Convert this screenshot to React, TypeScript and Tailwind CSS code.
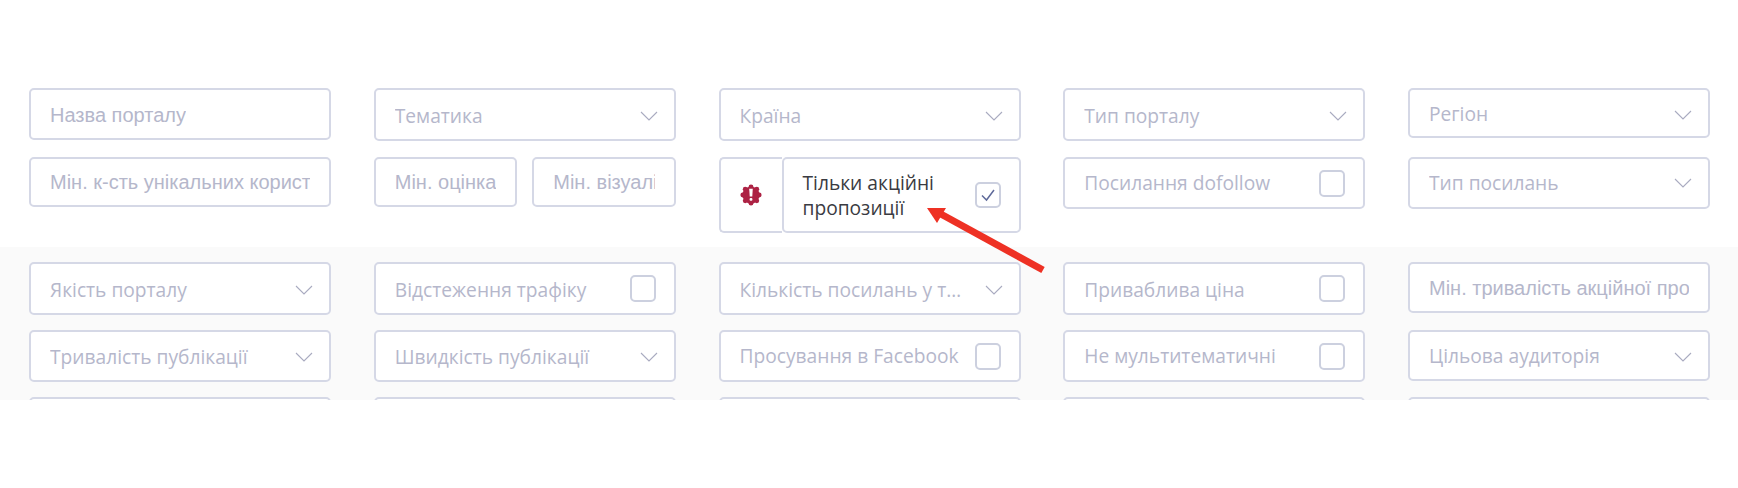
const boxClass =
  "flex items-center rounded-[5px] border-2 border-[#d5d8e6] bg-white";
const openSans = "font-['Open_Sans',sans-serif] text-[19.2px] text-[#b5b7cb]";
const arial = "font-['Liberation_Sans',sans-serif] text-[20px] text-[#b5b7cb]";

function Chevron() {
  return (
    <svg width="18" height="10" viewBox="0 0 18 10" fill="none" className="shrink-0">
      <path d="M1 1l8 8 8-8" stroke="#a9abc0" strokeWidth="1.1" />
    </svg>
  );
}

function BadgeIcon() {
  const lobes = [0, 45, 90, 135, 180, 225, 270, 315];
  return (
    <svg width="22" height="22" viewBox="0 0 22 22">
      <g fill="#ad2244">
        <circle cx="11" cy="11" r="8.6" />
        {lobes.map((a) => (
          <circle
            key={a}
            cx={11 + 8.2 * Math.cos((a * Math.PI) / 180)}
            cy={11 + 8.2 * Math.sin((a * Math.PI) / 180)}
            r="2.4"
          />
        ))}
      </g>
      <path d="M9.2 4.8h3.6l-.5 7.8h-2.6z" fill="#fff" />
      <rect x="9.6" y="14" width="2.8" height="2.8" rx="1" fill="#fff" />
    </svg>
  );
}

function Select({ label, h = "h-[53px] pt-[3px]" }: { label: string; h?: string }) {
  return (
    <div className={`${boxClass} ${h} pl-[19px] pr-[16px] gap-[20px]`}>
      <span className={`${openSans} truncate flex-1`}>{label}</span>
      <Chevron />
    </div>
  );
}

function Input({ label, h = "h-[52px]" }: { label: string; h?: string }) {
  return (
    <div className={`${boxClass} ${h} pl-[19px] pr-[19px]`}>
      <span className={`${arial} block overflow-hidden whitespace-nowrap`}>{label}</span>
    </div>
  );
}

function Check({ label, h = "h-[53px]" }: { label: string; h?: string }) {
  return (
    <div className={`${boxClass} ${h} pl-[19px] pr-[18px] justify-between`}>
      <span className={`${openSans} whitespace-nowrap ${h.includes("53") ? "pt-[3px]" : ""}`}>{label}</span>
      <span className="w-[26px] h-[27px] shrink-0 rounded-[5px] border-2 border-[#ccd0df]" />
    </div>
  );
}

export default function App() {
  return (
    <div className="w-[1738px] h-[488px] bg-white relative overflow-hidden">
      <section className="pt-[88px] pb-[14px] pl-[29px] pr-[28px] grid grid-cols-5 gap-x-[42.75px] gap-y-[15px] grid-rows-[54px_76px] items-start">
        <Input label="Назва порталу" h="h-[52px] pt-[1px]" />
        <Select label="Тематика" />
        <Select label="Країна" />
        <Select label="Тип порталу" />
        <Select label="Регіон" h="h-[50px] pt-[3px]" />

        <Input label="Мін. к-сть унікальних корист" h="h-[50px]" />
        <div className="grid grid-cols-2 gap-[15px]">
          <Input label="Мін. оцінка" h="h-[50px]" />
          <Input label="Мін. візуалі" h="h-[50px]" />
        </div>
        <div className="flex h-[76px]">
          <div className={`${boxClass} w-[63px] shrink-0 justify-center rounded-r-none border-r-0`}>
            <BadgeIcon />
          </div>
          <div className={`${boxClass} flex-1 pl-[19px] pr-[18px] justify-between`}>
            <span className="font-['Open_Sans',sans-serif] text-[19.2px] leading-[25px] text-[#3a3b42]">
              Тільки акційні
              <br />
              пропозиції
            </span>
            <span className="w-[26px] h-[26px] shrink-0 rounded-[5px] border-2 border-[#ccd0df] flex items-center justify-center">
              <svg width="16" height="14" viewBox="0 0 16 14" fill="none">
                <path d="M2 7.5l4.5 4.5L14 2" stroke="#5f6a9a" strokeWidth="1.5" />
              </svg>
            </span>
          </div>
        </div>
        <Check label="Посилання dofollow" h="h-[52px]" />
        <Select label="Тип посилань" h="h-[52px]" />
      </section>

      <section className="h-[153px] overflow-hidden bg-[#fafafa] pt-[15px] pl-[29px] pr-[28px] grid grid-cols-5 gap-x-[42.75px] gap-y-[15px] grid-rows-[53px_52px_53px] items-start">
        <Select label="Якість порталу" />
        <Check label="Відстеження трафіку" />
        <Select label="Кількість посилань у тексті" />
        <Check label="Приваблива ціна" />
        <Input label="Мін. тривалість акційної про" h="h-[51px]" />

        <Select label="Тривалість публікації" h="h-[52px] pt-[2px]" />
        <Select label="Швидкість публікації" h="h-[52px] pt-[2px]" />
        <Check label="Просування в Facebook" h="h-[52px]" />
        <Check label="Не мультитематичні" h="h-[52px]" />
        <Select label="Цільова аудиторія" h="h-[51px] pt-[2px]" />

        {/* Наступний ряд обрізаний, видно лише верхній край полів */}
        <div className={`${boxClass} h-[53px]`} />
        <div className={`${boxClass} h-[53px]`} />
        <div className={`${boxClass} h-[53px]`} />
        <div className={`${boxClass} h-[53px]`} />
        <div className={`${boxClass} h-[53px]`} />
      </section>

      {/* Стрілка поверх скріншота */}
      <svg className="absolute inset-0 pointer-events-none" width="1738" height="488">
        <path d="M927 208L946 208L937 223Z" fill="#ee3124" />
        <path d="M939 213L1043 270" stroke="#ee3124" strokeWidth="7" />
      </svg>
    </div>
  );
}
